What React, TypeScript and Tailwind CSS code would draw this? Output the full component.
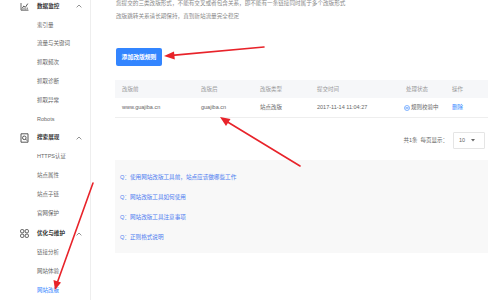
import React from "react";

const font = { fontFamily: '"Liberation Sans", "Noto Sans CJK SC", sans-serif' };

function Caret() {
  return (
    <svg width="6" height="4" viewBox="0 0 6 4" className="ml-auto mr-[8px]">
      <path d="M0.6 3.4 L3 1 L5.4 3.4" fill="none" stroke="#777" strokeWidth="0.8" />
    </svg>
  );
}

function ChartIcon() {
  return (
    <svg width="9" height="9" viewBox="0 0 9 9">
      <path d="M1 8.2 H8.5" stroke="#444" strokeWidth="0.8" fill="none" />
      <path d="M1 1 V8.2" stroke="#444" strokeWidth="0.8" fill="none" />
      <path d="M2 6.5 L3.8 4 L5.3 5.4 L7.8 1.6" stroke="#444" strokeWidth="0.9" fill="none" />
      <path d="M2.3 7.5 V6.8 M4 7.5 V6 M5.6 7.5 V6.5 M7.2 7.5 V5.5" stroke="#444" strokeWidth="0.8" />
    </svg>
  );
}

function SearchIcon() {
  return (
    <svg width="9" height="10" viewBox="0 0 9 10">
      <path d="M1 0.8 H8 V9.2 H1 Z" stroke="#444" strokeWidth="0.9" fill="none" />
      <circle cx="4.3" cy="4.8" r="1.8" stroke="#444" strokeWidth="0.9" fill="none" />
      <path d="M5.6 6.1 L7 7.6" stroke="#444" strokeWidth="1" />
    </svg>
  );
}

function GridIcon() {
  return (
    <svg width="9" height="9" viewBox="0 0 9 9">
      <rect x="0.6" y="0.6" width="3.2" height="3.2" rx="1" stroke="#444" strokeWidth="0.9" fill="none" />
      <rect x="5.2" y="0.6" width="3.2" height="3.2" rx="1" stroke="#444" strokeWidth="0.9" fill="none" />
      <rect x="0.6" y="5.2" width="3.2" height="3.2" rx="1" stroke="#444" strokeWidth="0.9" fill="none" />
      <rect x="5.2" y="5.2" width="3.2" height="3.2" rx="1" stroke="#444" strokeWidth="0.9" fill="none" />
    </svg>
  );
}

function Heading({ icon, label, className = "" }: { icon: React.ReactNode; label: string; className?: string }) {
  return (
    <div className={`h-[18.8px] flex items-center ${className}`}>
      <div className="w-[37px] pl-[20px] flex items-center">{icon}</div>
      <span className="text-[5.6px] font-bold text-[#333]">{label}</span>
      <Caret />
    </div>
  );
}

function Item({ label, active = false }: { label: string; active?: boolean }) {
  return (
    <div className="h-[18.8px] flex items-center pl-[37px]">
      <span className={`text-[5.5px] ${active ? "text-[#3385ff]" : "text-[#666]"}`}>{label}</span>
    </div>
  );
}

export default function App() {
  return (
    <div className="relative w-[500px] h-[300px] overflow-hidden bg-white flex" style={font}>
      {/* Sidebar */}
      <div className="w-[91px] shrink-0 border-r border-[#eee]">
        <div className="-mt-[3.4px]">
          <Heading icon={<ChartIcon />} label="数据监控" />
          <Item label="索引量" />
          <Item label="流量与关键词" />
          <Item label="抓取频次" />
          <Item label="抓取诊断" />
          <Item label="抓取异常" />
          <Item label="Robots" />
          <Heading icon={<SearchIcon />} label="搜索展现" />
          <Item label="HTTPS认证" />
          <Item label="站点属性" />
          <Item label="站点子链" />
          <Item label="官网保护" />
          <Heading icon={<GridIcon />} label="优化与维护" className="mt-[2px]" />
          <Item label="链接分析" />
          <Item label="网站体验" />
          <Item label="网站改版" active />
        </div>
      </div>

      {/* Main */}
      <div className="flex-1 pl-[24px] flex flex-col">
        <div className="-mt-[3.5px] pl-[1px] text-[5.6px] leading-[13px] text-[#888]">
          <div>您提交的三类改版形式，不能有交叉或者包含关系，即不能有一条链接同时属于多个改版形式</div>
          <div>改版跳转关系请长期保持，直到新站流量完全稳定</div>
        </div>

        <div className="mt-[25.5px] ml-[1px]">
          <div className="w-[46px] h-[18px] rounded-[2px] bg-[#3385ff] flex items-center justify-center text-white text-[5.8px] font-bold">
            添加改版规则
          </div>
        </div>

        {/* Table */}
        <div className="mt-[14px] w-[373px]">
          <div className="h-[18px] bg-[#f6f7f9] grid grid-cols-[79px_59px_57px_89px_46px_1fr] items-center pl-[7px] text-[5.5px] text-[#999]">
            <span>改版前</span>
            <span>改版后</span>
            <span>改版类型</span>
            <span>提交时间</span>
            <span>处理状态</span>
            <span>操作</span>
          </div>
          <div className="h-[20px] border-b border-[#eee] grid grid-cols-[79px_59px_57px_89px_46px_1fr] items-center pl-[7px] text-[5.5px] text-[#666]">
            <span>www.guajiba.cn</span>
            <span>guajiba.cn</span>
            <span>站点改版</span>
            <span>2017-11-14 11:04:27</span>
            <span className="flex items-center gap-[1px] -ml-[2px]">
              <svg width="6" height="6" viewBox="0 0 6 6">
                <circle cx="3" cy="3" r="2.5" stroke="#3385ff" strokeWidth="0.6" fill="none" />
                <path d="M1.5 2.5 H4.5 M1.5 3.6 H4.5" stroke="#3385ff" strokeWidth="0.5" />
              </svg>
              规则校验中
            </span>
            <span className="text-[#3385ff]">删除</span>
          </div>
          <div className="mt-[14px] flex justify-end items-center pr-[3px] text-[5.5px] text-[#666]">
            <span>共1条</span>
            <span className="ml-[3px]">每页显示：</span>
            <div className="ml-[5px] w-[32px] h-[17px] border border-[#e5e5e5] rounded-[1px] flex items-center pl-[5px] text-[#666]">
              <span>10</span>
              <svg width="4" height="3" viewBox="0 0 4 3" className="ml-[6px]">
                <path d="M0 0 H4 L2 2.5 Z" fill="#666" />
              </svg>
            </div>
          </div>
          <div className="mt-[11px] h-[93px] bg-[#f8f8f8] pt-[7px] pl-[5px] text-[5.6px] text-[#4d7cf0]">
            <div className="h-[20px] flex items-center">Q：使用网站改版工具前，站点应该做哪些工作</div>
            <div className="h-[20px] flex items-center">Q：网站改版工具如何使用</div>
            <div className="h-[20px] flex items-center">Q：网站改版工具注意事项</div>
            <div className="h-[20px] flex items-center">Q：正则格式说明</div>
          </div>
        </div>
      </div>

      {/* Red annotation arrows */}
      <svg className="absolute left-0 top-0 pointer-events-none" width="500" height="300" viewBox="0 0 500 300">
        <g stroke="#e8232a" strokeWidth="1.6" fill="#e8232a" strokeLinecap="round">
          <line x1="264" y1="47" x2="172" y2="55.4" />
          <polygon points="164,56 174,51.5 174.8,59.5" stroke="none" />
          <line x1="300" y1="166" x2="226" y2="121" />
          <polygon points="220,117 230.5,119 226,126" stroke="none" />
          <line x1="93" y1="183" x2="57.5" y2="282" />
          <polygon points="55,290 53.5,280 61,282.5" stroke="none" />
        </g>
      </svg>
    </div>
  );
}
